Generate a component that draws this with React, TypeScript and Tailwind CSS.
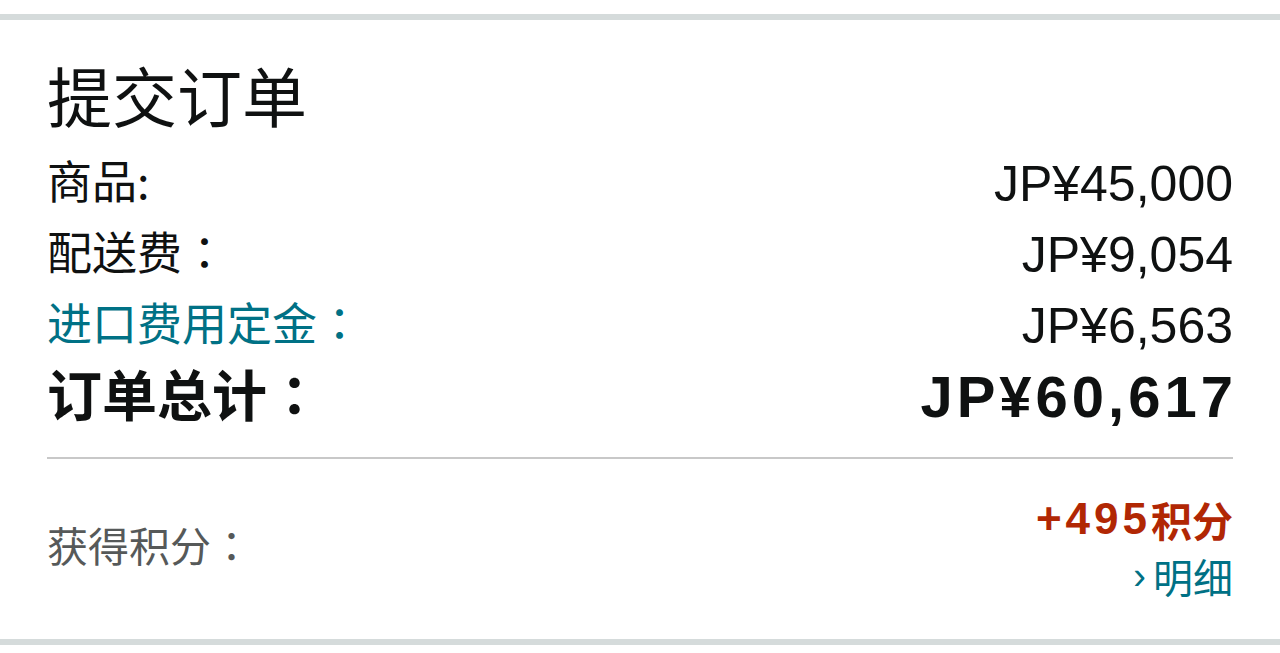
const cjk = { fontFamily: '"Noto Sans CJK SC", sans-serif' };
const latin = { fontFamily: '"Liberation Sans", "Noto Sans CJK SC", sans-serif' };
// full-width colon sits centred in its box in the TC cut
const colon = { fontFamily: '"Noto Sans CJK TC", sans-serif' };

function Row({ label, value, labelClass }: { label: React.ReactNode; value: string; labelClass?: string }) {
  return (
    <div className="flex h-[71px] items-center justify-between">
      <span className={`pb-[8px] text-[45px] leading-none ${labelClass ?? 'text-[#0f1111]'}`} style={cjk}>
        {label}
      </span>
      <span className="text-[50px] leading-none text-[#0f1111]" style={latin}>
        {value}
      </span>
    </div>
  );
}

const Colon = () => <span style={colon}>：</span>;

export default function App() {
  return (
    <div className="h-[653px] w-full overflow-hidden bg-white" style={cjk}>
      <div className="h-[14px]" />
      <div className="h-[6px] bg-[#d5dbdb]" />

      <div className="pl-[47px] pr-[47px]">
        {/* Title */}
        <div className="flex h-[128px] items-center pt-[20px]">
          <h1 className="text-[65px] font-normal leading-none text-[#0f1111]">提交订单</h1>
        </div>

        {/* Summary rows */}
        <Row label="商品:" value="JP¥45,000" />
        <Row label={<>配送费<Colon /></>} value="JP¥9,054" />
        <Row label={<>进口费用定金<Colon /></>} value="JP¥6,563" labelClass="text-[#007185]" />
        <div className="flex h-[71px] items-center justify-between">
          <span className="pb-[8px] text-[55px] font-bold leading-none text-[#0f1111]">
            订单总计<Colon />
          </span>
          <span className="-mr-[4px] text-[58px] font-bold leading-none tracking-[4px] text-[#0f1111]" style={latin}>
            JP¥60,617
          </span>
        </div>

        <div className="mt-[25px] h-[2px] bg-[#c8c8c8]" />

        {/* Points */}
        <div className="flex h-[180px] items-center justify-between">
          <span className="pb-[10px] text-[41px] leading-none text-[#565959]">
            获得积分<Colon />
          </span>
          <div className="flex flex-col items-end">
            <span className="flex h-[60px] items-center text-[41px] font-bold leading-none text-[#b12704]">
              <span className="text-[44px] tracking-[4px]" style={latin}>+495</span>
              积分
            </span>
            <span className="flex h-[60px] items-center pb-[6px] text-[40px] leading-none text-[#007185]">
              <span className="mr-[7px] text-[38px]" style={latin}>›</span>
              明细
            </span>
          </div>
        </div>
      </div>

      <div className="h-[6px] bg-[#d5dbdb]" />
    </div>
  );
}
